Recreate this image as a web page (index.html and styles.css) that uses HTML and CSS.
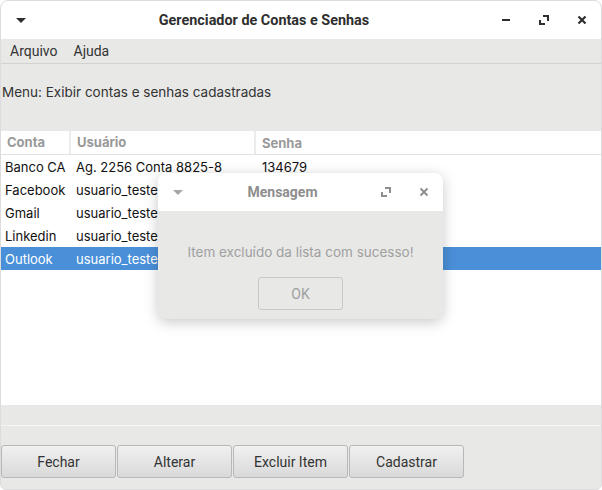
FILE: index.html
```html
<!DOCTYPE html>
<html lang="pt">
<head>
<meta charset="utf-8">
<title>Gerenciador de Contas e Senhas</title>
<link rel="stylesheet" href="styles.css">
</head>
<body>
<div class="window">
  <div class="titlebar">
    <div class="tb-left">
      <svg width="10" height="5" viewBox="0 0 10 5"><polygon points="0,0 10,0 5,5" fill="#2e2e2e"/></svg>
    </div>
    <div class="tb-title">Gerenciador de Contas e Senhas</div>
    <div class="tb-right">
      <div class="tb-btn"><svg width="10" height="10" viewBox="0 0 10 10"><rect x="1" y="4" width="8" height="2" fill="#2e2e2e"/></svg></div>
      <div class="tb-btn"><svg width="10" height="10" viewBox="0 0 10 10"><path d="M4 1H9V6" fill="none" stroke="#2e2e2e" stroke-width="2"/><path d="M1 5V9H6" fill="none" stroke="#2e2e2e" stroke-width="2"/></svg></div>
      <div class="tb-btn"><svg width="10" height="10" viewBox="0 0 10 10"><path d="M1.5 1.5L8.5 8.5M8.5 1.5L1.5 8.5" stroke="#2e2e2e" stroke-width="2.2"/></svg></div>
    </div>
  </div>
  <div class="menubar">
    <span class="menu-item">Arquivo</span>
    <span class="menu-item">Ajuda</span>
  </div>
  <div class="info">Menu: Exibir contas e senhas cadastradas</div>
  <div class="table">
    <div class="row head">
      <div class="c1">Conta</div><div class="c2">Usuário</div><div class="c3">Senha</div>
    </div>
    <div class="row"><div class="c1">Banco CA</div><div class="c2">Ag. 2256 Conta 8825-8</div><div class="c3">134679</div></div>
    <div class="row"><div class="c1">Facebook</div><div class="c2">usuario_teste</div><div class="c3"></div></div>
    <div class="row"><div class="c1">Gmail</div><div class="c2">usuario_teste</div><div class="c3"></div></div>
    <div class="row"><div class="c1">Linkedin</div><div class="c2">usuario_teste</div><div class="c3"></div></div>
    <div class="row sel"><div class="c1">Outlook</div><div class="c2">usuario_teste</div><div class="c3"></div></div>
  </div>
  <div class="gap"></div>
  <div class="sep"></div>
  <div class="buttons">
    <button class="btn">Fechar</button>
    <button class="btn">Alterar</button>
    <button class="btn">Excluir Item</button>
    <button class="btn">Cadastrar</button>
  </div>

  <div class="dialog">
    <div class="dlg-title">
      <div class="dlg-left"><svg width="10" height="5" viewBox="0 0 10 5"><polygon points="0,0 10,0 5,5" fill="#a6a6a6"/></svg></div>
      <div class="dlg-name">Mensagem</div>
      <div class="dlg-right">
        <div class="tb-btn"><svg width="10" height="10" viewBox="0 0 10 10"><path d="M4 1H9V6" fill="none" stroke="#8e8e8e" stroke-width="2"/><path d="M1 5V9H6" fill="none" stroke="#8e8e8e" stroke-width="2"/></svg></div>
        <div class="tb-btn"><svg width="10" height="10" viewBox="0 0 10 10"><path d="M1.5 1.5L8.5 8.5M8.5 1.5L1.5 8.5" stroke="#8e8e8e" stroke-width="2"/></svg></div>
      </div>
    </div>
    <div class="dlg-body">
      <div class="dlg-msg">Item excluído da lista com sucesso!</div>
      <button class="dlg-ok">OK</button>
    </div>
  </div>
</div>
</body>
</html>
```

FILE: styles.css
```css
html, body {
  margin: 0;
  padding: 0;
  background: #ffffff;
}
.window {
  position: relative;
  width: 600px;
  height: 488px;
  border: 1px solid #dcdcdc;
  border-radius: 8px 8px 6px 6px;
  background: #e8e8e7;
  overflow: hidden;
  display: flex;
  flex-direction: column;
  font-family: "Inter", "Open Sans", sans-serif;
  font-size: 13px;
}
.titlebar {
  height: 38px;
  background: #ffffff;
  display: flex;
  align-items: center;
}
.tb-left {
  width: 40px;
  height: 38px;
  display: flex;
  align-items: center;
  justify-content: center;
}
.tb-title {
  flex: 1;
  text-align: center;
  font-family: "Roboto", sans-serif;
  font-weight: bold;
  font-size: 14.4px;
  color: #2e2e2e;
}
.tb-right {
  width: 114px;
  display: flex;
}
.tb-btn {
  width: 38px;
  height: 38px;
  display: flex;
  align-items: center;
  justify-content: center;
}
.menubar {
  height: 24px;
  border-bottom: 1px solid #d2d2d2;
  display: flex;
  align-items: center;
  padding-left: 9px;
  font-family: "Roboto", sans-serif;
  font-size: 14px;
  color: #333;
}
.menu-item { margin-right: 16px; }
.info {
  height: 67px;
  box-sizing: border-box;
  padding: 20px 0 0 1px;
  line-height: 17px;
  font-size: 13.5px;
  color: #333;
}
.table {
  height: 274px;
  background: #ffffff;
}
.row {
  display: flex;
  height: 23px;
  align-items: center;
  color: #111;
}
.row.head {
  height: 23px;
  border-bottom: 1px solid #e2e2e2;
  color: #999;
  font-weight: bold;
}
.row.head .c1, .row.head .c2 { border-right: 2px solid #ececec; height: 23px; line-height: 23px; }
.c1 { width: 70px; padding-left: 4px; box-sizing: border-box; }
.c2 { width: 185px; padding-left: 5px; box-sizing: border-box; }
.c3 { padding-left: 6px; }
.row.head .c1 { padding-left: 6px; }
.row.head .c2 { padding-left: 6px; }
.row.sel { background: #4a90d9; color: #ffffff; }
.gap { height: 20px; }
.sep { height: 1px; background: #f6f6f6; }
.buttons {
  display: flex;
  margin-top: 19px;
}
.btn {
  width: 115px;
  height: 33px;
  margin: 0 1px 0 0;
  border: 1px solid #b8b8b8;
  border-radius: 3px;
  background: linear-gradient(#f0f0f0, #d9d9d9);
  font-family: "Roboto", sans-serif;
  font-size: 14px;
  color: #333;
  padding: 0;
}
.dialog {
  position: absolute;
  left: 157px;
  top: 172px;
  width: 285px;
  height: 146px;
  border-radius: 8px;
  overflow: hidden;
  box-shadow: 0 3px 14px rgba(0,0,0,0.22);
  background: #e8e8e7;
  display: flex;
  flex-direction: column;
}
.dlg-title {
  height: 38px;
  background: #ffffff;
  display: flex;
  align-items: center;
}
.dlg-left {
  width: 40px;
  display: flex;
  justify-content: center;
}
.dlg-name {
  flex: 1;
  text-align: center;
  font-family: "Roboto", sans-serif;
  font-weight: bold;
  font-size: 14px;
  color: #8e8e8e;
}
.dlg-right { width: 76px; display: flex; }
.dlg-body {
  flex: 1;
  display: flex;
  flex-direction: column;
  align-items: center;
}
.dlg-msg {
  margin-top: 33px;
  line-height: 17px;
  color: #a0a0a0;
  font-size: 13.5px;
}
.dlg-ok {
  margin-top: 16px;
  width: 85px;
  height: 33px;
  border: 1px solid #c8c8c8;
  border-radius: 3px;
  background: #e8e8e7;
  color: #a0a0a0;
  font-family: "Roboto", sans-serif;
  font-size: 14px;
  padding: 0;
}
```
